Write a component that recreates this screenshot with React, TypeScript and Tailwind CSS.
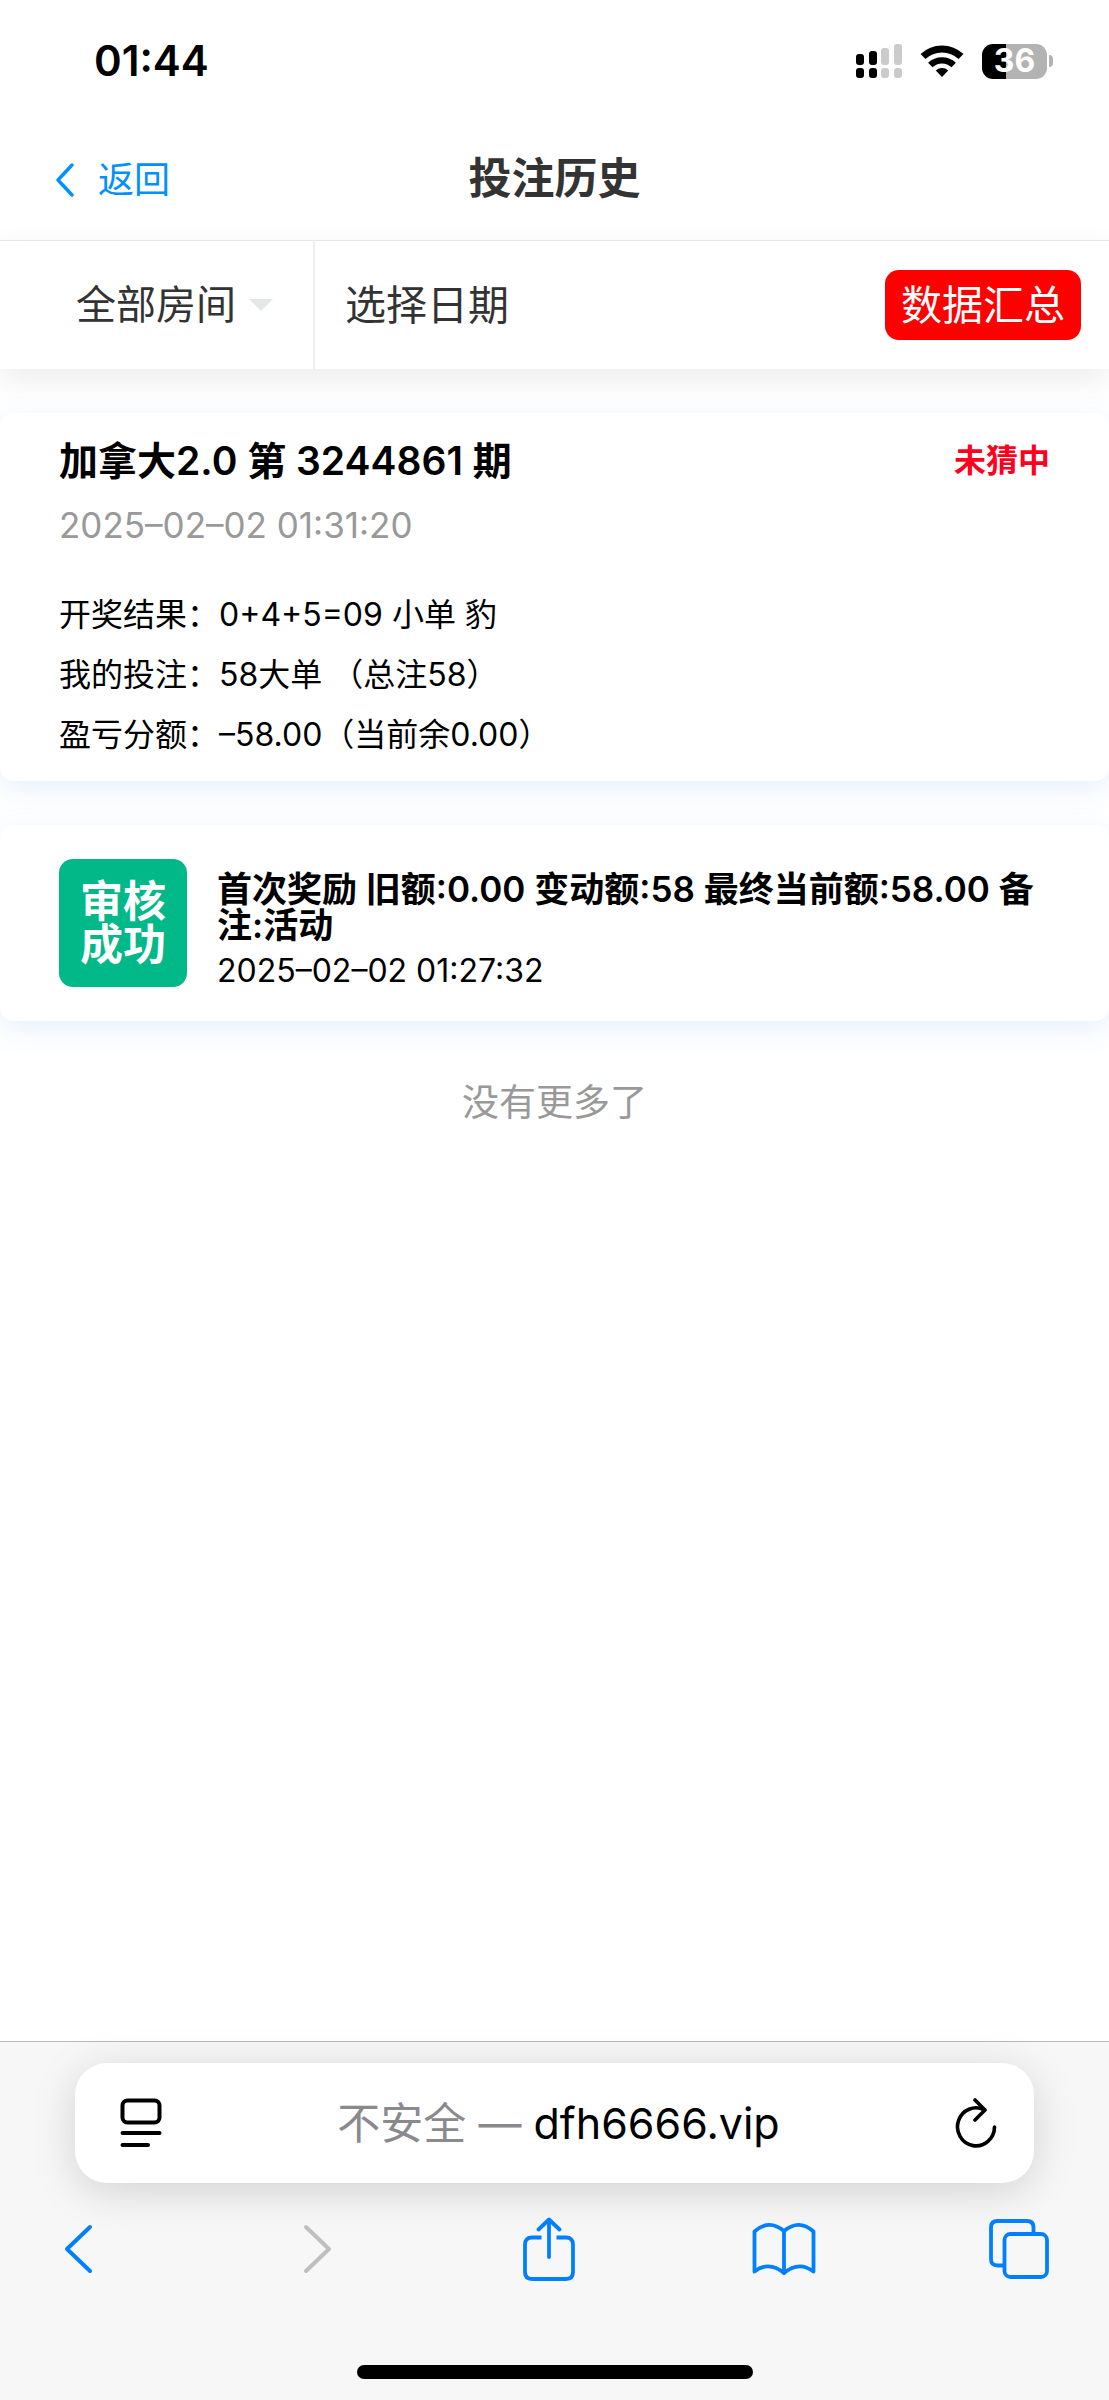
const FONT = "font-['Inter','Noto_Sans_CJK_SC',sans-serif]";

const rows = [
  { label: '开奖结果：', value: '0+4+5=09 小单 豹' },
  { label: '我的投注：', value: '58大单 （总注58）' },
  { label: '盈亏分额：', value: '–58.00（当前余0.00）' },
];

const SignalIcon = () => (
  <svg width="46" height="34" viewBox="0 0 46 34" fill="#000">
    <rect x="0" y="10" width="8" height="11" rx="3" />
    <rect x="13" y="7" width="8" height="14" rx="3" />
    <rect x="25" y="4" width="8" height="17" rx="3" fill="#cbcbcb" />
    <rect x="38" y="0" width="8" height="21" rx="3" fill="#cbcbcb" />
    <rect x="0" y="24" width="8" height="10" rx="3" />
    <rect x="13" y="24" width="8" height="10" rx="3" />
    <rect x="25" y="24" width="8" height="10" rx="3" fill="#cbcbcb" />
    <rect x="38" y="24" width="8" height="10" rx="3" fill="#cbcbcb" />
  </svg>
);

const WifiIcon = () => (
  <svg width="44" height="32" viewBox="0 0 44 32" fill="none" stroke="#000">
    <path d="M3 11.5A27.5 27.5 0 0 1 41 11.5" strokeWidth="7" />
    <path d="M10.3 20A17 17 0 0 1 33.7 20" strokeWidth="6.4" />
    <path d="M22 32L15.8 25.6A9 9 0 0 1 28.2 25.6Z" fill="#000" stroke="none" />
  </svg>
);

const Battery = () => (
  <div className="flex items-center gap-[2px]">
    <div className="flex h-[35px] w-[65px] items-center justify-center rounded-[11px] bg-linear-to-r from-black from-37% to-[#b3b3b3] to-37% text-[32px] leading-none font-bold text-white">
      36
    </div>
    <div className="h-3 w-1 rounded-r-full bg-[#b3b3b3]" />
  </div>
);

const PageSettingsIcon = () => (
  <svg width="42" height="50" viewBox="0 0 42 50" fill="none" stroke="#000" strokeWidth="4" strokeLinecap="round">
    <rect x="2.5" y="2.5" width="37" height="22" rx="5" />
    <path d="M2.5 35H39.5M2.5 47H28" />
  </svg>
);

const ReloadIcon = () => (
  <svg width="42" height="50" viewBox="0 0 42 50" fill="none" stroke="#000" strokeWidth="3.6" strokeLinecap="round" strokeLinejoin="round">
    <path d="M39.5 29A18.5 19 0 1 1 29.5 12" />
    <path d="M20 2L30 12L20 22" />
  </svg>
);

const ChevronIcon = ({ flip = false }: { flip?: boolean }) => (
  <svg width="30" height="50" viewBox="0 0 30 50" fill="none" stroke="currentColor" strokeWidth="4" strokeLinecap="round" strokeLinejoin="round">
    <path d={flip ? 'M3 3L26 25L3 47' : 'M27 3L4 25L27 47'} />
  </svg>
);

const ShareIcon = () => (
  <svg width="52" height="64" viewBox="0 0 52 64" fill="none" stroke="currentColor" strokeWidth="3.8" strokeLinecap="round" strokeLinejoin="round">
    <path d="M18.5 20.5H9Q2 20.5 2 27.5V55Q2 62 9 62H43Q50 62 50 55V27.5Q50 20.5 43 20.5H33.5" strokeLinecap="butt" />
    <path d="M26 40V3M15.5 12.5L26 2.5L36.5 12.5" />
  </svg>
);

const BookIcon = () => (
  <svg width="64" height="54" viewBox="0 0 64 54" fill="none" stroke="currentColor" strokeWidth="3.8" strokeLinecap="round" strokeLinejoin="round">
    <path d="M32 51Q17 38.5 2.5 49.5V9.5Q17 -3.5 32 9Q47 -3.5 61.5 9.5V49.5Q47 38.5 32 51Z" />
    <path d="M32 9V51" />
  </svg>
);

const TabsIcon = () => (
  <svg width="60" height="60" viewBox="0 0 60 60" fill="none" stroke="currentColor" strokeWidth="3.8">
    <path d="M14.5 46.5H8.5Q2 46.5 2 40V8.5Q2 2 8.5 2H38Q44.5 2 44.5 8.5V14.5" />
    <rect x="15.5" y="15" width="42.5" height="43" rx="6" />
  </svg>
);

export default function App() {
  return (
    <div className={`flex min-h-screen flex-col overflow-hidden bg-white text-black ${FONT}`}>
      <div className="flex h-[120px] items-center justify-between pt-0.5 pr-14 pl-[94px]">
        <span className="text-[42px] leading-none font-semibold">01:44</span>
        <div className="flex items-center gap-[18px]">
          <SignalIcon />
          <WifiIcon />
          <Battery />
        </div>
      </div>

      <header className="grid h-[121px] grid-cols-3 items-center border-b border-[#ebebf0] px-14">
        <button className="flex items-center gap-6 text-[36px] leading-none text-[#0090ff]">
          <svg width="18" height="34" viewBox="0 0 18 34" fill="none" stroke="currentColor" strokeWidth="3.4" strokeLinecap="round" strokeLinejoin="round">
            <path d="M16 2L2 17L16 32" />
          </svg>
          返回
        </button>
        <h1 className="pb-1 text-center text-[43px] leading-none font-semibold text-[#333]">投注历史</h1>
      </header>

      <div className="relative z-10 flex h-[128px] items-center bg-white pr-7 text-[#333] shadow-[0_10px_30px_rgba(0,0,0,0.08)]">
        <label className="relative flex h-full items-center border-r-2 border-[#eee] pr-10 pl-[76px]">
          <select aria-label="房间" className="w-[197px] appearance-none bg-transparent text-[40px] leading-[60px] outline-none">
            <option>全部房间</option>
          </select>
          <svg className="pointer-events-none absolute right-10" width="24" height="12" viewBox="0 0 24 12" fill="#e4e6e8">
            <path d="M0 0H24L12 12Z" />
          </svg>
        </label>
        <button className="ml-[30px] text-[41px] leading-none">选择日期</button>
        <button className="ml-auto h-[70px] rounded-[14px] bg-[#ff0000] px-4 text-[41px] leading-none text-white">
          数据汇总
        </button>
      </div>

      <main className="flex flex-col gap-11 pt-11">
        <article className="rounded-[14px] bg-white px-[59px] pt-[18px] pb-4 shadow-[0_8px_30px_rgba(0,110,255,0.1)]">
          <div className="flex items-center justify-between">
            <h2 className="text-[39px] leading-[60px] font-semibold">加拿大2.0 第 3244861 期</h2>
            <span className="text-[32px] leading-none font-semibold text-[#ff001f]">未猜中</span>
          </div>
          <time className="block text-[35px] leading-[68px] text-[#999]">2025–02–02 01:31:20</time>
          <dl className="mt-[26px] text-[32px] leading-[60px]">
            {rows.map((row) => (
              <div key={row.label} className="flex">
                <dt>{row.label}</dt>
                <dd>{row.value}</dd>
              </div>
            ))}
          </dl>
        </article>

        <article className="flex items-start gap-[30px] rounded-[14px] bg-white px-[59px] pt-[34px] pb-[22px] shadow-[0_8px_30px_rgba(0,110,255,0.1)]">
          <div className="flex size-32 shrink-0 items-center justify-center rounded-[14px] bg-[#00b888] px-5 text-center text-[43px] leading-[43px] font-semibold text-white">
            审核成功
          </div>
          <div className="pt-3">
            <h2 className="text-[35px] leading-[36px] font-semibold">
              首次奖励 旧额:0.00 变动额:58 最终当前额:58.00 备注:活动
            </h2>
            <time className="block text-[32px] leading-[56px]">2025–02–02 01:27:32</time>
          </div>
        </article>
      </main>
      <p className="mt-[52px] text-center text-[37px] leading-[60px] text-[#999]">没有更多了</p>

      <footer className="mt-auto border-t border-[#b8b8b8] bg-[#f7f7f7] pt-[21px] pb-[21px]">
        <div className="mx-[75px] flex h-[120px] items-center justify-between rounded-[32px] bg-white px-[37px] shadow-[0_8px_44px_rgba(0,0,0,0.15)]">
          <button aria-label="页面设置" className="pl-2">
            <PageSettingsIcon />
          </button>
          <button className="text-[43px] leading-none">
            <span className="text-[#8a8a8e]">不安全 — </span>dfh6666.vip
          </button>
          <button aria-label="重新载入">
            <ReloadIcon />
          </button>
        </div>
        <nav className="mt-8 flex h-[68px] items-center justify-between pr-[58px] pl-[46px] text-[#007fff]">
          <button aria-label="后退" className="flex w-16 justify-center">
            <ChevronIcon />
          </button>
          <button aria-label="前进" className="flex w-16 justify-end pr-3 text-[#bfbfbf]" disabled>
            <ChevronIcon flip />
          </button>
          <button aria-label="分享" className="flex w-16 justify-center">
            <ShareIcon />
          </button>
          <button aria-label="书签" className="flex w-16 justify-center">
            <BookIcon />
          </button>
          <button aria-label="标签页" className="flex w-16 justify-center">
            <TabsIcon />
          </button>
        </nav>
        <div className="mx-auto mt-[82px] h-[14px] w-[396px] rounded-full bg-black" />
      </footer>
    </div>
  );
}
